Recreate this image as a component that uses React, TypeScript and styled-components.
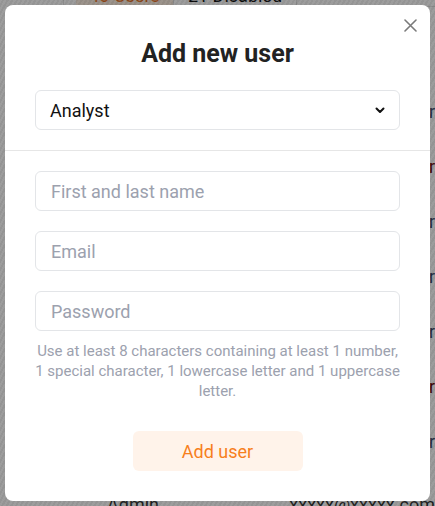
import React from "react";
import styled, { createGlobalStyle } from "styled-components";

const Global = createGlobalStyle`
  html, body { margin: 0; padding: 0; }
  body {
    font-family: Roboto, "Noto Sans", "Liberation Sans", sans-serif;
    background: #ffffff;
    width: 435px;
    height: 506px;
    overflow: hidden;
  }
  * { box-sizing: border-box; }
`;

const Page = styled.div`
  width: 435px;
  height: 506px;
  display: flex;
  flex-direction: column;
  background: #ffffff;
  position: relative;
  overflow: hidden;
`;

const TabBar = styled.div`
  display: flex;
  height: 24px;
  margin-top: -15px;
  margin-left: 63px;
  padding-left: 12px;
  border-left: 1px solid #e2e2e2;
  border-bottom: 1px solid #e5e5e5;
`;

const Tab = styled.div<{ $active?: boolean }>`
  display: flex;
  align-items: center;
  justify-content: center;
  width: ${(p) => (p.$active ? "98px" : "123px")};
  font-size: 18px;
  line-height: 21px;
  border-right: 1px solid #e2e2e2;
  background: ${(p) => (p.$active ? "#fdeee2" : "#ffffff")};
  color: ${(p) => (p.$active ? "#e8742a" : "#111111")};
  white-space: nowrap;
`;

const Table = styled.div`
  display: flex;
  flex-direction: column;
  padding-top: 77px;
`;

const Row = styled.div<{ $gap?: number }>`
  display: flex;
  height: 55px;
  margin-top: ${(p) => p.$gap ?? 0}px;
  align-items: center;
  font-size: 18px;
  color: #333;
`;

const RowName = styled.div`
  width: 303px;
  padding-left: 107px;
`;

const RowMail = styled.div<{ $red?: boolean }>`
  flex: 1;
  padding-left: 127px;
  white-space: nowrap;
  color: ${(p) => (p.$red ? "#6b0a0a" : "#3a4a6a")};
`;

const AdminMail = styled.div`
  flex: 1;
  white-space: nowrap;
  color: #333;
`;

const Overlay = styled.div`
  position: absolute;
  inset: 0;
  background-color: rgba(0, 0, 0, 0.4);
  background-image: repeating-linear-gradient(
    -60deg,
    rgba(255, 255, 255, 0.035) 0px,
    rgba(255, 255, 255, 0.035) 2px,
    rgba(0, 0, 0, 0.03) 2px,
    rgba(0, 0, 0, 0.03) 4px
  );
  display: flex;
  align-items: flex-start;
  justify-content: center;
  padding-top: 5px;
`;

const Modal = styled.div`
  position: relative;
  width: 425px;
  background: #ffffff;
  border-radius: 8px;
  display: flex;
  flex-direction: column;
`;

const CloseButton = styled.button`
  position: absolute;
  top: 7px;
  right: 7px;
  width: 26px;
  height: 26px;
  border: none;
  background: transparent;
  padding: 0;
  display: flex;
  align-items: center;
  justify-content: center;
  cursor: pointer;
`;

const Header = styled.div`
  display: flex;
  flex-direction: column;
  padding: 35px 30px 20px;
  border-bottom: 1px solid #e6e6e6;
`;

const Title = styled.h2`
  margin: 0 0 22px;
  text-align: center;
  font-size: 25px;
  line-height: 28px;
  font-weight: 700;
  color: #222222;
`;

const SelectBox = styled.div`
  height: 40px;
  border: 1px solid #e3e5e8;
  border-radius: 6px;
  display: flex;
  align-items: center;
  justify-content: space-between;
  padding: 0 14px;
  font-size: 18px;
  color: #111111;
`;

const Body = styled.div`
  display: flex;
  flex-direction: column;
  padding: 20px 30px 30px;
`;

const Fields = styled.div`
  display: flex;
  flex-direction: column;
  gap: 20px;
`;

const Input = styled.input`
  height: 40px;
  border: 1px solid #e3e5e8;
  border-radius: 6px;
  padding: 0 15px;
  font-family: inherit;
  font-size: 18px;
  color: #111;
  outline: none;
  &::placeholder {
    color: #9ca1ae;
  }
`;

const Help = styled.p`
  margin: 10px 0 0;
  text-align: center;
  font-size: 15px;
  line-height: 20px;
  color: #9ca1ae;
`;

const SubmitButton = styled.button`
  align-self: center;
  margin-top: 30px;
  width: 170px;
  height: 40px;
  border: none;
  border-radius: 6px;
  background: #fff3ea;
  color: #f77f1c;
  font-family: inherit;
  font-size: 18px;
  cursor: pointer;
`;

export default function App() {
  const reds = [false, true, false, false, false, true, false];
  return (
    <>
      <Global />
      <Page>
        <TabBar>
          <Tab $active>40 Users</Tab>
          <Tab>21 Disabled</Tab>
        </TabBar>
        <Table>
          {reds.map((red, i) => (
            <Row key={i}>
              <RowName />
              <RowMail $red={red}>r</RowMail>
            </Row>
          ))}
          <Row $gap={8}>
            <RowName>Admin</RowName>
            <AdminMail>xxxxx@xxxxx.com</AdminMail>
          </Row>
        </Table>
        <Overlay>
          <Modal>
            <CloseButton aria-label="Close">
              <svg width="13" height="13" viewBox="0 0 13 13">
                <path d="M1 1 L12 12 M12 1 L1 12" stroke="#7a7a7a" strokeWidth="1.6" strokeLinecap="round" />
              </svg>
            </CloseButton>
            <Header>
              <Title>Add new user</Title>
              <SelectBox>
                <span>Analyst</span>
                <svg width="10" height="7" viewBox="0 0 10 7">
                  <path d="M1.5 1.5 L5 5 L8.5 1.5" stroke="#111" strokeWidth="2" fill="none" strokeLinecap="round" strokeLinejoin="round" />
                </svg>
              </SelectBox>
            </Header>
            <Body>
              <Fields>
                <Input placeholder="First and last name" />
                <Input placeholder="Email" />
                <Input placeholder="Password" type="password" />
              </Fields>
              <Help>
                Use at least 8 characters containing at least 1 number, 1 special character, 1 lowercase letter and 1 uppercase letter.
              </Help>
              <SubmitButton>Add user</SubmitButton>
            </Body>
          </Modal>
        </Overlay>
      </Page>
    </>
  );
}
